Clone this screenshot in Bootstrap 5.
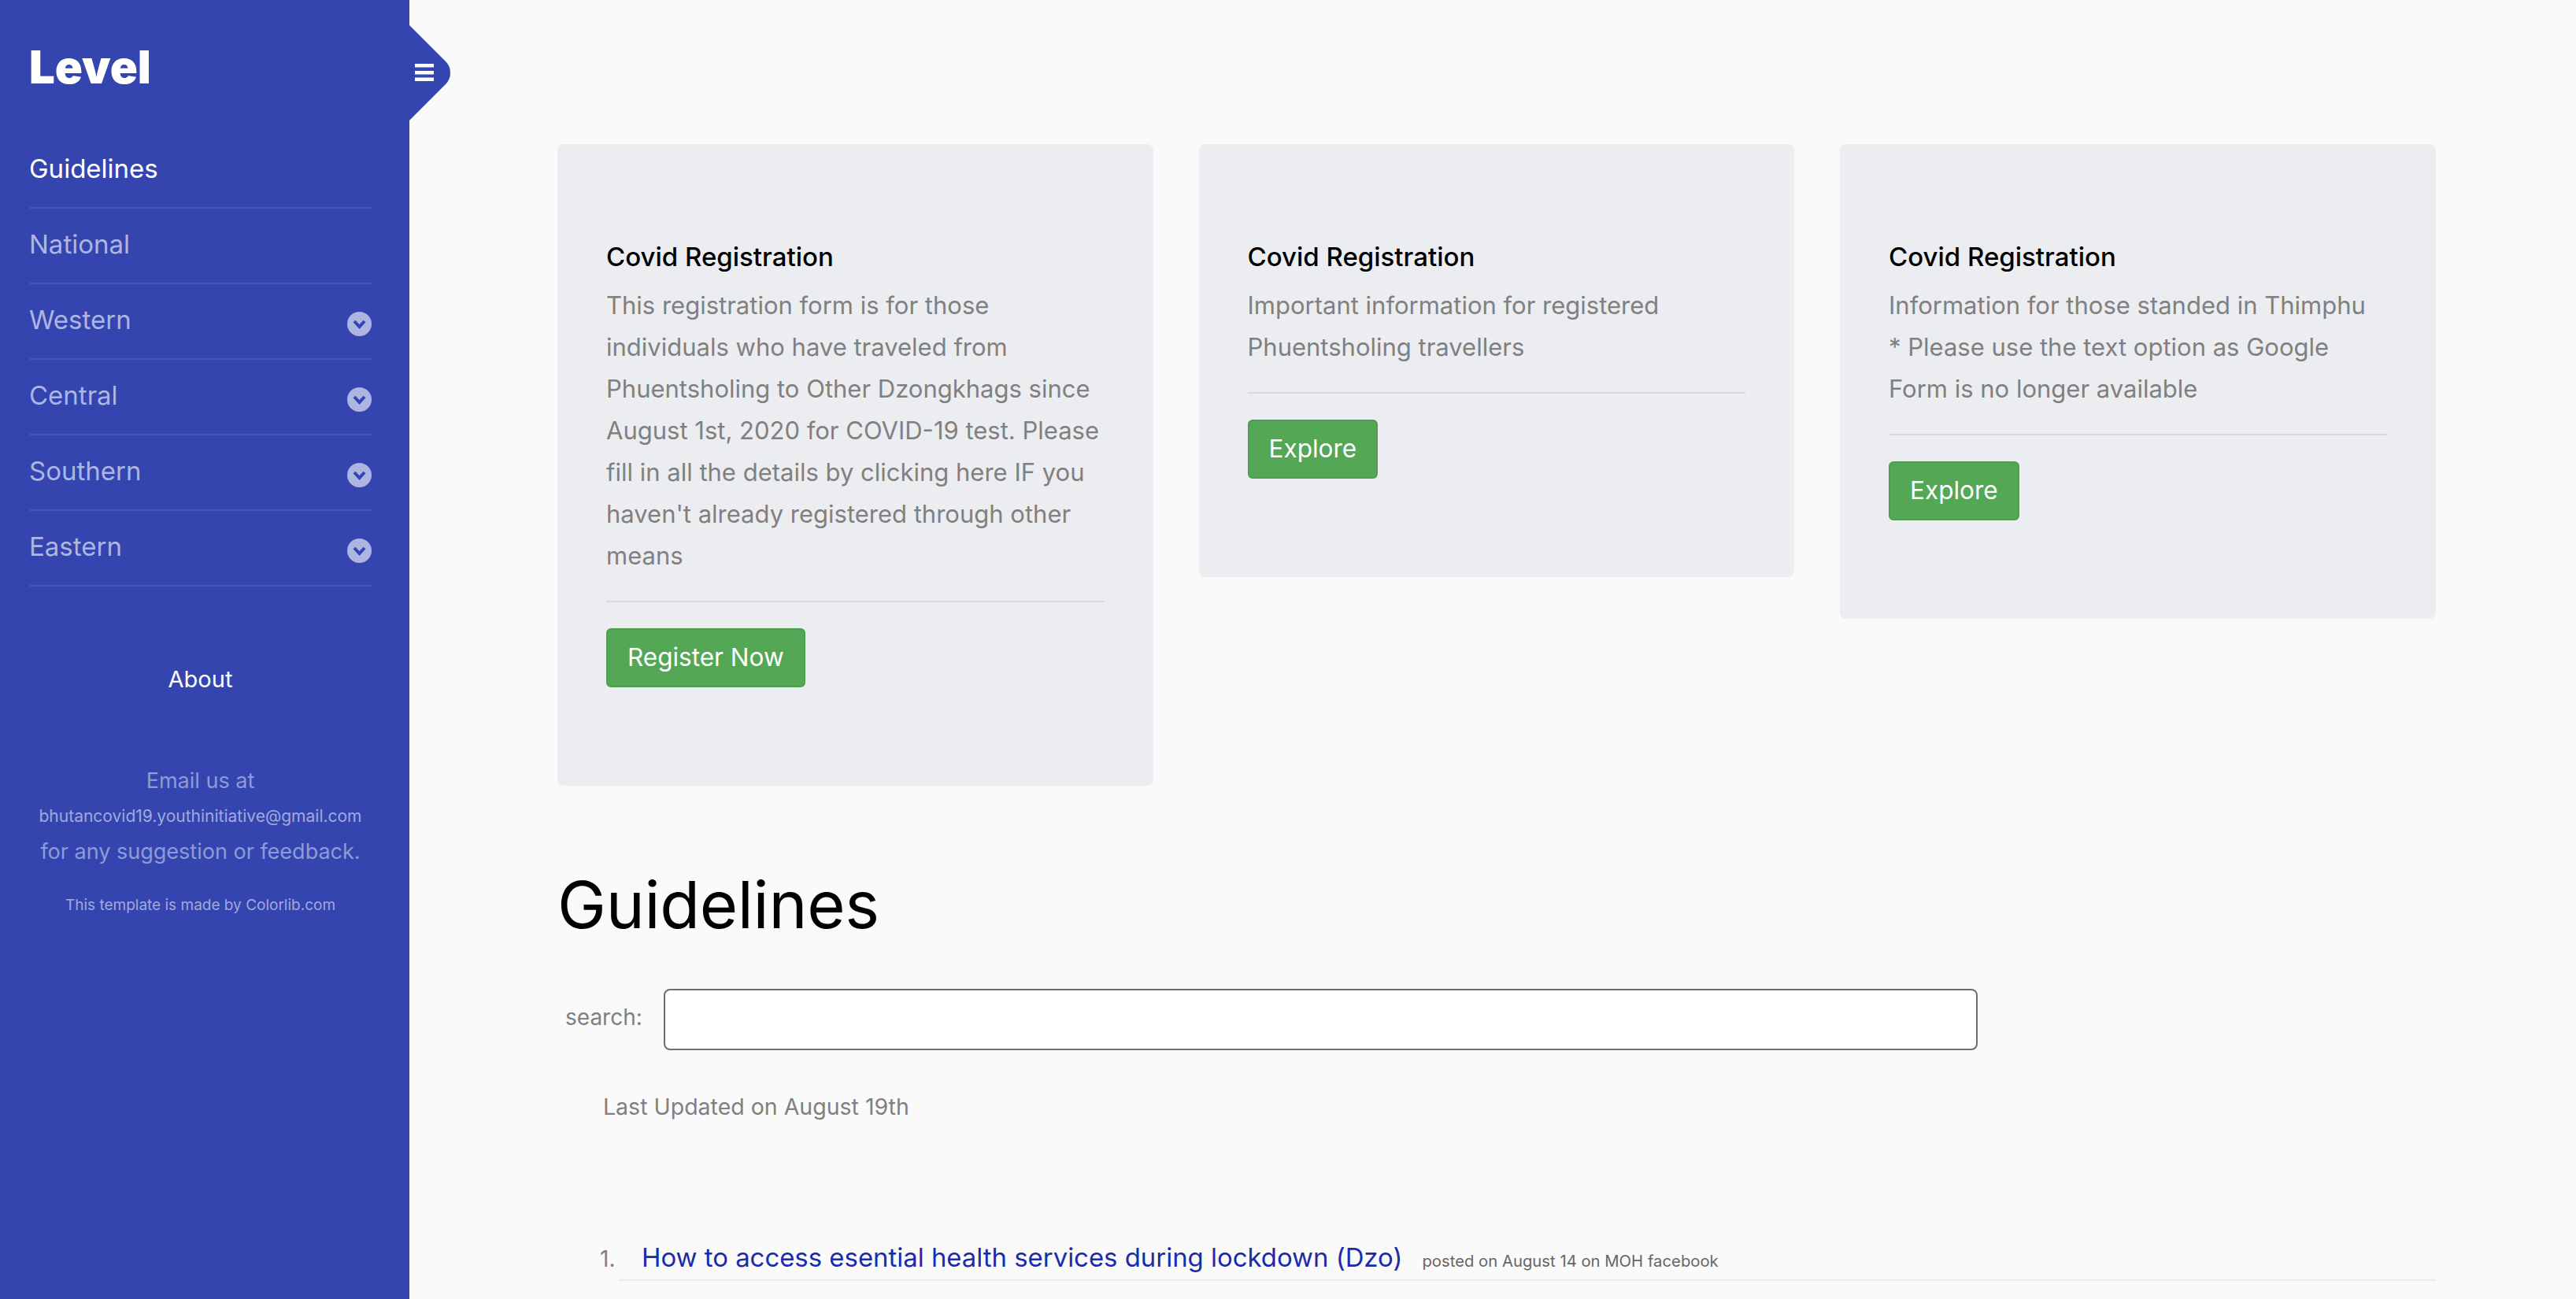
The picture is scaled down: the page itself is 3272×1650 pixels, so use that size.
<!doctype html>
<html lang="en"><head><meta charset="utf-8"><title>Level</title>
<link href="https://cdn.jsdelivr.net/npm/bootstrap@5.3.0/dist/css/bootstrap.min.css" rel="stylesheet">
<style>
html,body{height:100%}
body{background:#fafafa;font-family:"Inter","Liberation Sans",sans-serif;color:#808080;font-size:31px;overflow:hidden}
.shell{height:1650px}
.side{width:520px;background:#3445b0;color:#adb5e2;flex:none;position:relative;padding:0 48px 0 37px}
.brand{font-size:58px;font-weight:900;color:#fff;line-height:1;margin:0;padding:56px 0 55px}
.side-toggle{position:absolute;left:520px;top:32px;width:52px;height:121px}
.menu-row{height:96px;border-bottom:2px solid #4656ba;color:#adb5e2;font-size:33px;text-decoration:none;padding-bottom:2px}
.menu-row.on{color:#fff}
.chev{width:31px;height:31px;margin-top:8px}
.about{color:#fff;font-size:29px;text-align:center;margin:96px 0 0}
.foot{text-align:center;color:#8f9ad6;margin:84px -11px 0 -11px}
.foot p{margin:0;line-height:45px;font-size:27px;white-space:nowrap}
.foot .mail{font-size:21px;color:#a0a9de}
.foot .made{font-size:19px;line-height:28px;margin-top:32px;color:#a0a9de}
.main-col{padding:183px 178px 0 188px;min-width:0}
.grid-cards{display:grid;grid-template-columns:repeat(3,756.5px);gap:58px;align-items:start}
.info-box{background:#ecedf1;border-radius:8px;padding:120px 62px 0}
.info-box h3{font-size:33px;font-weight:500;color:#000;margin:0 0 12px;line-height:46px}
.info-box p{margin:0;line-height:53px;font-size:31px;padding-bottom:31px;border-bottom:2px solid #d8d9dc}
.go{background:#53a755;border:2px solid #4d9e50;color:#fff;font-size:31.5px;line-height:1;padding:19px 25px 20px;border-radius:6px;margin-top:33px;margin-bottom:125px}
.main-title{font-size:83px;font-weight:400;color:#000;margin:91px 0 0;line-height:120px;letter-spacing:-.3px}
.find{margin:47px 0 0 10px;width:1794px}
.find label{font-size:28px;white-space:nowrap;margin:0 27px 6px 0}
.find .form-control{height:78px;border:2px solid #6e6e6e;border-radius:8px;background:#fff}
.stamp{font-size:28.5px;margin:52px 0 0 58px;line-height:40px}
.posts{margin:147px 0 0;padding:0;list-style:none}
.posts li{display:flex;align-items:baseline;border-bottom:2px solid #ebebeb;margin-left:78px;padding-bottom:3px}
.posts .num{margin-left:-24px;width:24px;font-size:28px}
.posts a{color:#1a2bab;font-size:32.9px;text-decoration:none;margin-left:29px}
.posts small{font-size:20.3px;color:#666;margin-left:25px}
</style></head><body>
<div class="d-flex shell">
<aside class="side">
<h1 class="brand">Level</h1>
<svg class="side-toggle" viewBox="0 0 52 121"><path d="M0 0L46 46Q52 52 52 60.5Q52 69 46 75L0 121Z" fill="#3445b0"/><rect x="7" y="49" width="24" height="4.5" fill="#fff"/><rect x="7" y="58" width="24" height="4.5" fill="#fff"/><rect x="7" y="66.5" width="24" height="4.5" fill="#fff"/></svg>
<nav class="d-flex flex-column">
<a class="menu-row on d-flex justify-content-between align-items-center" href="#">Guidelines</a>
<a class="menu-row d-flex justify-content-between align-items-center" href="#">National</a>
<a class="menu-row d-flex justify-content-between align-items-center" href="#">Western<svg class="chev" viewBox="0 0 31 31"><circle cx="15.5" cy="15.5" r="15.5" fill="#adb5e2"/><path d="M9 12l6.5 7 6.5-7" fill="none" stroke="#3445b0" stroke-width="4"/></svg></a>
<a class="menu-row d-flex justify-content-between align-items-center" href="#">Central<svg class="chev" viewBox="0 0 31 31"><circle cx="15.5" cy="15.5" r="15.5" fill="#adb5e2"/><path d="M9 12l6.5 7 6.5-7" fill="none" stroke="#3445b0" stroke-width="4"/></svg></a>
<a class="menu-row d-flex justify-content-between align-items-center" href="#">Southern<svg class="chev" viewBox="0 0 31 31"><circle cx="15.5" cy="15.5" r="15.5" fill="#adb5e2"/><path d="M9 12l6.5 7 6.5-7" fill="none" stroke="#3445b0" stroke-width="4"/></svg></a>
<a class="menu-row d-flex justify-content-between align-items-center" href="#">Eastern<svg class="chev" viewBox="0 0 31 31"><circle cx="15.5" cy="15.5" r="15.5" fill="#adb5e2"/><path d="M9 12l6.5 7 6.5-7" fill="none" stroke="#3445b0" stroke-width="4"/></svg></a>
</nav>
<p class="about">About</p>
<div class="foot"><p>Email us at</p><p class="mail">bhutancovid19.youthinitiative@gmail.com</p><p>for any suggestion or feedback.</p><p class="made">This template is made by Colorlib.com</p></div>
</aside>
<main class="flex-grow-1 main-col">
<div class="grid-cards">
<div class="info-box"><h3>Covid Registration</h3><p>This registration form is for those individuals who have traveled from Phuentsholing to Other Dzongkhags since August 1st, 2020 for COVID-19 test. Please fill in all the details by clicking here IF you haven't already registered through other means</p><a class="btn go" href="#">Register Now</a></div>
<div class="info-box"><h3>Covid Registration</h3><p>Important information for registered Phuentsholing travellers</p><a class="btn go" href="#">Explore</a></div>
<div class="info-box"><h3>Covid Registration</h3><p>Information for those standed in Thimphu<br>* Please use the text option as Google Form is no longer available</p><a class="btn go" href="#">Explore</a></div>
</div>
<h2 class="main-title">Guidelines</h2>
<div class="find d-flex align-items-center"><label for="q">search:</label><input id="q" class="form-control" type="text"></div>
<p class="stamp">Last Updated on August 19th</p>
<ol class="posts"><li><span class="num">1.</span><a href="#">How to access esential health services during lockdown (Dzo)</a><small>posted on August 14 on MOH facebook</small></li></ol>
</main>
</div>
<script src="https://cdn.jsdelivr.net/npm/bootstrap@5.3.0/dist/js/bootstrap.bundle.min.js"></script>
</body></html>
